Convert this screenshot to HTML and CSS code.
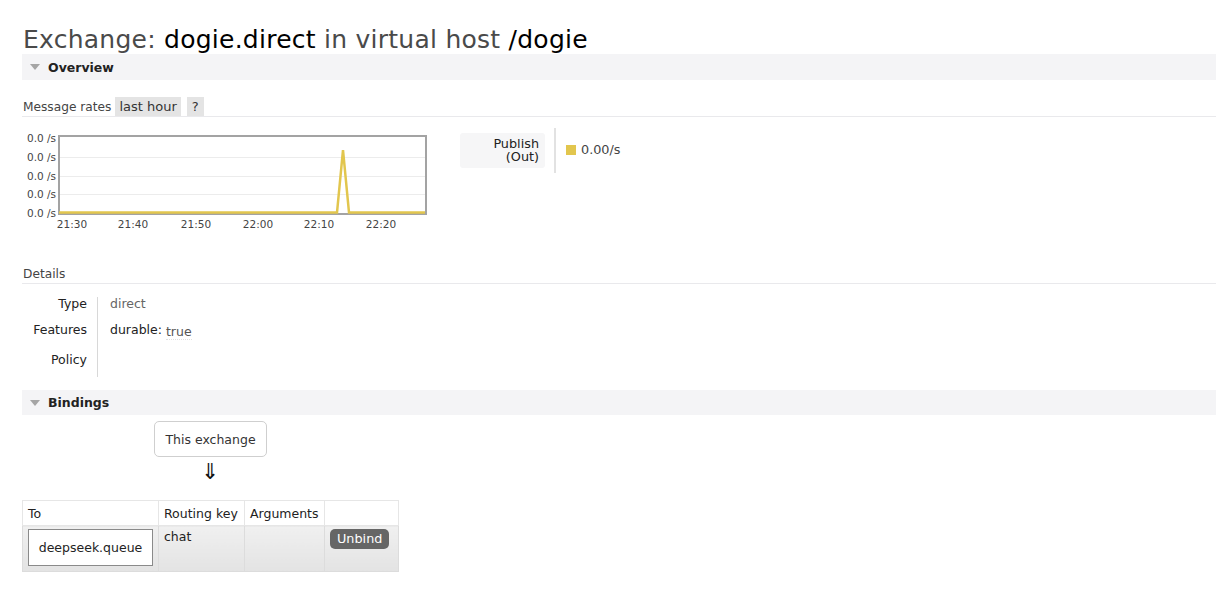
FILE: index.html
```html
<!DOCTYPE html>
<html>
<head>
<meta charset="utf-8">
<link rel="stylesheet" href="styles.css">
</head>
<body>
<div class="page">
  <h1 class="title">Exchange: <b>dogie.direct</b> in virtual host <b>/dogie</b></h1>

  <div class="section-bar"><span class="tri"></span><span class="section-name">Overview</span></div>

  <div class="sub-head">
    <span class="sub-label">Message rates</span>
    <span class="chip">last hour</span>
    <span class="chip q">?</span>
  </div>

  <div class="rates">
    <svg class="chart" width="410" height="106" viewBox="0 0 410 106">
      <g stroke="#ececec" stroke-width="1">
        <line x1="37" y1="29.5" x2="403" y2="29.5"/>
        <line x1="37" y1="48.5" x2="403" y2="48.5"/>
        <line x1="37" y1="66.5" x2="403" y2="66.5"/>
      </g>
      <rect x="37" y="8" width="367" height="78" fill="none" stroke="#a3a3a3" stroke-width="2"/>
      <polyline points="37,84.5 315,84.5 321,22 327,84.5 403,84.5" fill="none" stroke="#e2c64e" stroke-width="2.5" stroke-linejoin="miter"/>
      <g class="ylab" text-anchor="end">
        <text x="34" y="14">0.0 /s</text>
        <text x="34" y="33">0.0 /s</text>
        <text x="34" y="52">0.0 /s</text>
        <text x="34" y="70">0.0 /s</text>
        <text x="34" y="89">0.0 /s</text>
      </g>
      <g class="xlab" text-anchor="middle">
        <text x="50" y="100">21:30</text>
        <text x="111" y="100">21:40</text>
        <text x="174" y="100">21:50</text>
        <text x="236" y="100">22:00</text>
        <text x="297" y="100">22:10</text>
        <text x="359" y="100">22:20</text>
      </g>
    </svg>
    <div class="legend">
      <div class="legend-key">Publish<br>(Out)</div>
      <div class="legend-sep"></div>
      <div class="legend-val"><span class="swatch"></span>0.00/s</div>
    </div>
  </div>

  <div class="sub-head details-head">
    <span class="sub-label">Details</span>
  </div>

  <div class="facts">
    <div class="fact-labels">
      <div class="fl r1">Type</div>
      <div class="fl r2">Features</div>
      <div class="fl r3">Policy</div>
    </div>
    <div class="fact-values">
      <div class="fv r1 grey">direct</div>
      <div class="fv r2">durable: <abbr class="tv">true</abbr></div>
      <div class="fv r3"></div>
    </div>
  </div>

  <div class="section-bar bindings"><span class="tri"></span><span class="section-name">Bindings</span></div>

  <div class="flow">
    <div class="this-ex">This exchange</div>
    <div class="arrow">&#8659;</div>
  </div>

  <table class="list">
    <thead>
      <tr><th class="c1">To</th><th class="c2">Routing key</th><th class="c3">Arguments</th><th class="c4"></th></tr>
    </thead>
    <tbody>
      <tr>
        <td class="c1"><span class="qbox">deepseek.queue</span></td>
        <td class="c2 key">chat</td>
        <td class="c3"></td>
        <td class="c4"><span class="btn">Unbind</span></td>
      </tr>
    </tbody>
  </table>
</div>
</body>
</html>
```

FILE: styles.css
```css
html, body {
  margin: 0;
  padding: 0;
  background: #fff;
}
body {
  font-family: "DejaVu Sans", Verdana, sans-serif;
  font-size: 12px;
  color: #484848;
}
.page {
  padding-left: 22px;
  padding-top: 25px;
}
.title {
  margin: 0 0 0 1px;
  font-size: 25px;
  font-weight: normal;
  color: #4a4a4a;
  line-height: 29px;
  letter-spacing: 0.25px;
}
.title b {
  font-weight: normal;
  color: #000;
}
.section-bar {
  height: 26px;
  background: #f4f4f6;
  display: flex;
  align-items: center;
}
.tri {
  width: 0;
  height: 0;
  border-left: 5px solid transparent;
  border-right: 5px solid transparent;
  border-top: 6px solid #a5a5a5;
  margin-left: 8px;
  margin-right: 8px;
}
.section-name {
  font-weight: bold;
  font-size: 12.5px;
  color: #222;
}
.sub-head {
  margin-top: 17px;
  height: 19px;
  border-bottom: 1px solid #e9e9ec;
  display: flex;
  align-items: center;
  gap: 4px;
  padding-left: 1px;
}
.sub-label {
  font-size: 12.2px;
  color: #444;
}
.chip {
  background: #e4e4e4;
  padding: 0 4px;
  line-height: 19px;
  height: 19px;
  font-size: 13px;
  color: #333;
}
.chip.q {
  margin-left: 2px;
  padding: 0 5px;
}
.rates {
  display: flex;
  align-items: flex-start;
  margin-top: 11px;
}
.chart {
  display: block;
  margin-left: 0;
}
.chart text {
  font-family: "DejaVu Sans", Verdana, sans-serif;
  font-size: 10.5px;
  fill: #444;
}
.legend {
  display: flex;
  align-items: stretch;
  margin-left: 28px;
  height: 45px;
}
.legend-key {
  margin-top: 5px;
  width: 85px;
  height: 35px;
  box-sizing: border-box;
  background: #f6f6f7;
  border-radius: 3px;
  text-align: right;
  padding: 4px 6px 0 0;
  line-height: 13px;
  font-size: 12.8px;
  color: #222;
}
.legend-sep {
  width: 2px;
  background: #e2e2e2;
  margin-left: 9px;
}
.legend-val {
  display: flex;
  align-items: center;
  font-size: 12.8px;
  color: #444;
  padding-left: 10px;
  padding-bottom: 2px;
}
.swatch {
  width: 10px;
  height: 10px;
  background: #e2c64e;
  margin-right: 5px;
}
.details-head {
  margin-top: 31px;
  height: 18px;
}
.facts {
  display: flex;
  margin-top: 13px;
}
.fact-labels {
  width: 65px;
  text-align: right;
  font-size: 12.5px;
  color: #222;
  padding-right: 10px;
  border-right: 1px solid #d8d8d8;
  height: 80px;
}
.fact-values {
  padding-left: 12px;
  font-size: 12.5px;
  color: #222;
}
.fl, .fv {
  line-height: 14px;
}
.r1 { margin-top: 0; height: 26px; }
.r2 { height: 30px; }
.r3 { height: 24px; }
.grey { color: #666; }
.tv {
  text-decoration: none;
  color: #555;
  border-bottom: 1px dotted #e0e0e0;
  position: relative;
  top: 2px;
}
.bindings {
  margin-top: 13px;
  height: 25px;
}
.flow {
  width: 376px;
  display: flex;
  flex-direction: column;
  align-items: flex-start;
}
.this-ex {
  margin-top: 6px;
  margin-left: 132px;
  width: 113px;
  height: 36px;
  box-sizing: border-box;
  border: 1px solid #cfcfcf;
  border-radius: 5px;
  display: flex;
  align-items: center;
  justify-content: center;
  font-size: 12.5px;
  color: #333;
}
.arrow {
  margin-left: 179px;
  margin-top: 2px;
  font-size: 22px;
  line-height: 26px;
  color: #111;
}
.list {
  margin-top: 15px;
  border-collapse: collapse;
  font-size: 12.5px;
  color: #222;
}
.list th {
  font-weight: normal;
  text-align: left;
  height: 25px;
  box-sizing: border-box;
  padding: 0 4px 0 5px;
  border: 1px solid #e6e6e6;
  background: #fff;
  vertical-align: middle;
}
.list td {
  height: 46px;
  box-sizing: border-box;
  padding: 0 5px;
  background: linear-gradient(#f0f0f0, #e3e3e3);
  border: 1px solid #dcdcdc;
  vertical-align: top;
}
.c1 { width: 136px; }
.c2 { width: 86px; }
.c3 { width: 80px; }
.c4 { width: 74px; }
.list td.c1 { padding: 3px 5px 5px 5px; }
.qbox {
  display: flex;
  align-items: center;
  justify-content: center;
  width: 125px;
  height: 37px;
  box-sizing: border-box;
  background: #fff;
  border: 1px solid #8a8a8a;
  color: #222;
}
.list td.key { padding-top: 3px; }
.list td.c4 { padding: 3px 5px; }
.btn {
  display: inline-block;
  background: #666;
  color: #fff;
  border-radius: 5px;
  height: 20px;
  line-height: 20px;
  padding: 0 7px;
  font-size: 12.8px;
}
```
